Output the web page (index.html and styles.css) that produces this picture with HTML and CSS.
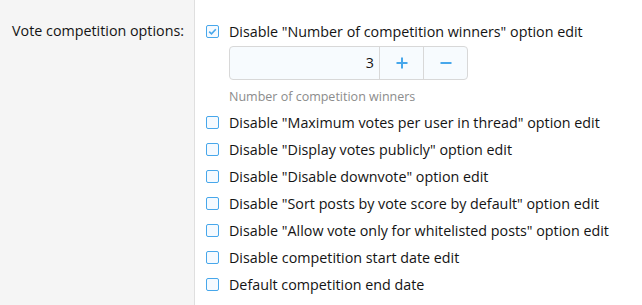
FILE: index.html
```html
<!DOCTYPE html>
<html lang="en">
<head>
  <meta charset="UTF-8" />
  <title>Vote competition options</title>
  <link rel="stylesheet" href="styles.css">
</head>
<body>
  <dl class="form-row">
    <dt class="form-label">Vote competition options:</dt>
    <dd class="form-input">
      <ul class="choices">
        <li>
          <label class="choice">
            <span class="box checked">
              <svg viewBox="0 0 11 11"><path d="M2.2 5.6 L4.5 7.8 L8.8 3.2" fill="none" stroke="#47a7eb" stroke-width="1.6"/></svg>
            </span>
            Disable "Number of competition winners" option edit
          </label>
          <div class="dependent">
            <div class="spinbox">
              <span class="spin-value">3</span>
              <button class="spin-btn" aria-label="Increase">
                <svg viewBox="0 0 12 12"><path d="M6 0.5 V11.5 M0.5 6 H11.5" stroke="#47a7eb" stroke-width="2"/></svg>
              </button>
              <button class="spin-btn" aria-label="Decrease">
                <svg viewBox="0 0 12 12"><path d="M0.5 6 H11.5" stroke="#47a7eb" stroke-width="2"/></svg>
              </button>
            </div>
            <div class="hint">Number of competition winners</div>
          </div>
        </li>
        <li><label class="choice"><span class="box"></span>Disable "Maximum votes per user in thread" option edit</label></li>
        <li><label class="choice"><span class="box"></span>Disable "Display votes publicly" option edit</label></li>
        <li><label class="choice"><span class="box"></span>Disable "Disable downvote" option edit</label></li>
        <li><label class="choice"><span class="box"></span>Disable "Sort posts by vote score by default" option edit</label></li>
        <li><label class="choice"><span class="box"></span>Disable "Allow vote only for whitelisted posts" option edit</label></li>
        <li><label class="choice"><span class="box"></span>Disable competition start date edit</label></li>
        <li><label class="choice"><span class="box"></span>Default competition end date</label></li>
      </ul>
    </dd>
  </dl>
</body>
</html>
```

FILE: styles.css
```css
* { box-sizing: border-box; }
body {
  margin: 0;
  font-family: "Open Sans", "Noto Sans", sans-serif;
  font-size: 14.3px;
  color: #141414;
  background: #fff;
}
.form-row {
  display: flex;
  margin: 0;
  min-height: 305px;
}
.form-label {
  width: 195px;
  flex: none;
  background: #f5f5f5;
  border-right: 1px solid #dfdfdf;
  text-align: right;
  padding: 20px 10px 0 0;
  line-height: 21px;
}
.form-input {
  margin: 0;
  padding: 18px 0 0 11px;
}
.choices {
  list-style: none;
  margin: 0;
  padding: 0;
}
.choice {
  display: flex;
  align-items: center;
  height: 27px;
  white-space: nowrap;
}
.box {
  width: 13px;
  height: 13px;
  flex: none;
  border: 1px solid #47a7eb;
  border-radius: 2px;
  background: #f5faff;
  margin-right: 10px;
  display: flex;
}
.box svg { width: 11px; height: 11px; }
.dependent {
  padding-left: 23px;
  padding-top: 1px;
}
.spinbox {
  display: flex;
  width: 239px;
  height: 34px;
  border: 1px solid #d8d8d8;
  border-radius: 4px;
  background: #f7fbfe;
}
.spin-value {
  flex: 1;
  text-align: right;
  line-height: 32px;
  padding-right: 5px;
}
.spin-btn {
  width: 44px;
  border: none;
  border-left: 1px solid #d8d8d8;
  background: none;
  padding: 0;
  display: flex;
  align-items: center;
  justify-content: center;
}
.spin-btn svg { width: 12px; height: 12px; }
.hint {
  font-size: 12.5px;
  color: #8c8c8c;
  line-height: 20px;
  margin: 7px 0 2px;
}
```
